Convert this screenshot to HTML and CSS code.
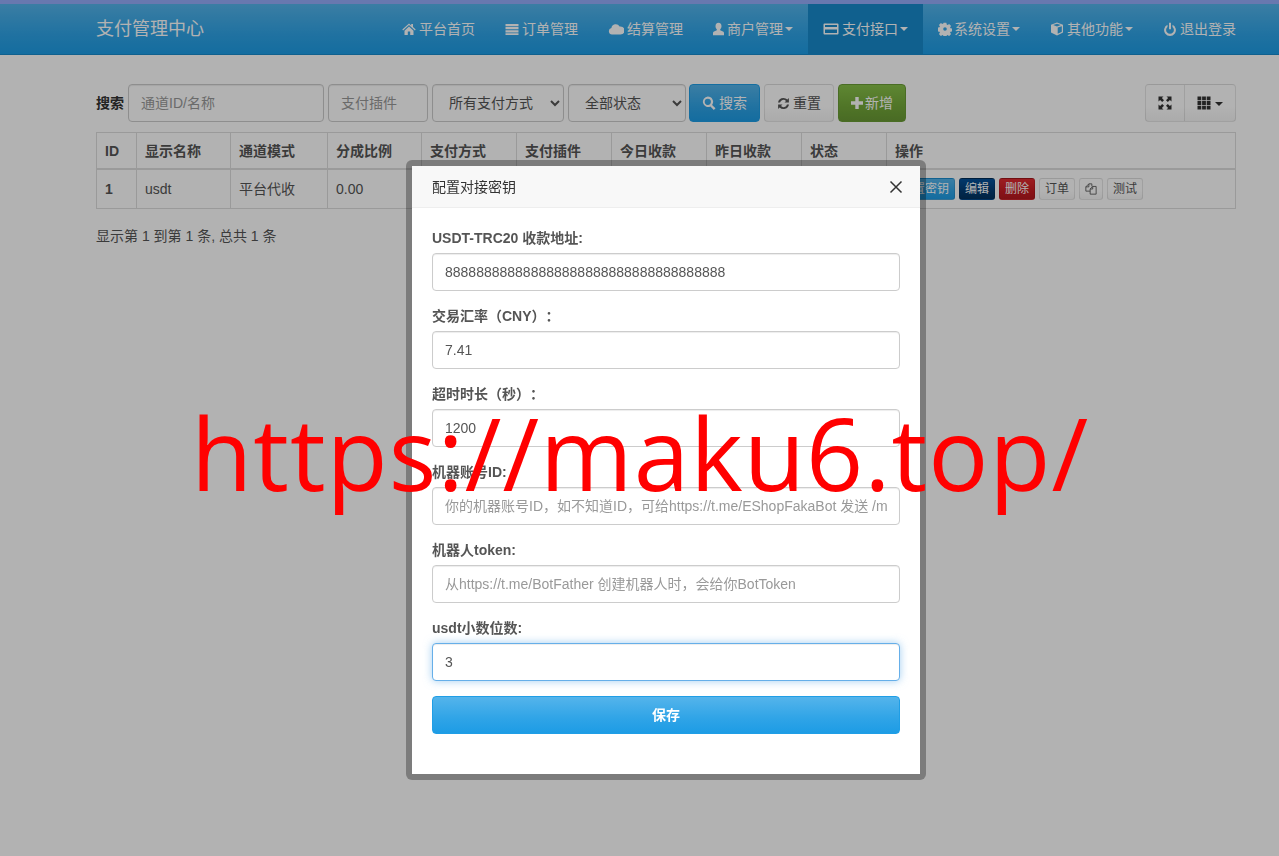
FILE: index.html
```html
<!DOCTYPE html>
<html lang="en">

<head>
  <meta charset="UTF-8" />
  <meta name="viewport" content="width=device-width, initial-scale=1.0" />
  <title>支付接口</title>
  <link rel="stylesheet" href="styles.css">
</head>

<body>
  <svg class="sprite" aria-hidden="true">
    <symbol id="i-home" viewBox="0 0 14 14"><path d="M7 1.500 .3 7.600l.8.800L7 3l5.900 5.400.8-.8L11 5.100V2H9.200v1.500zM2.500 8.700V13h3.300V9.500h2.400V13h3.300V8.700L7 4.600z"/></symbol>
    <symbol id="i-list" viewBox="0 0 14 14"><path d="M.5 2h13v2.200H.5zM.5 5.100h13v2.200H.5zM.5 8.200h13v2.200H.5zM.5 11.300h13v1.700H.5z"/></symbol>
    <symbol id="i-cloud" viewBox="0 0 16 14"><path d="M4 12.500a3.300 3.300 0 0 1-.6-6.500A4.400 4.400 0 0 1 11.600 4.500a3.100 3.100 0 0 1 .9 0 4 4 0 0 1 0 8z"/></symbol>
    <symbol id="i-user" viewBox="1.500 0 11 14"><path d="M7 .8a3 3.500 0 0 1 3 3.500c0 1.300-.6 2.500-1.300 3v1l2.800 1.300c.6.300 1 .8 1 1.500v2.100H1.500v-2.100c0-.7.400-1.200 1-1.500l2.800-1.300v-1C4.600 6.800 4 5.600 4 4.300A3 3.500 0 0 1 7 .8z"/></symbol>
    <symbol id="i-card" viewBox="0 0 16 14"><path fill-rule="evenodd" d="M1.500 1.500h13a1 1 0 0 1 1 1v9a1 1 0 0 1-1 1h-13a1 1 0 0 1-1-1v-9a1 1 0 0 1 1-1zM2 3v2h12V3zm0 4.500V11h12V7.500z"/></symbol>
    <symbol id="i-cog" viewBox="0 0 14 14"><path fill-rule="evenodd" d="M5.600.8h2.800l.3 1.700 1 .4 1.400-1 2 2-1 1.400.4 1 1.700.3v2.800l-1.700.3-.4 1 1 1.400-2 2-1.400-1-1 .4-.3 1.700H5.600l-.3-1.700-1-.4-1.400 1-2-2 1-1.400-.4-1-1.700-.3V5.600l1.700-.3.4-1-1-1.400 2-2 1.400 1 1-.4zM7 5.200a1.800 1.800 0 1 0 0 3.600 1.800 1.800 0 0 0 0-3.600z"/></symbol>
    <symbol id="i-cube" viewBox="0 0 14 14"><path fill-rule="evenodd" d="M7 .5 13 2.700v7.700L7 13.500 1 10.400V2.700zM3.200 3 7 4.400 10.800 3 7 1.700zM7.700 5.600v6.200l4.100-2.100V4.200z"/></symbol>
    <symbol id="i-power" viewBox="0 0 14 14"><path d="M6 .8h2v6.400H6zM4.500 2.700v2.200a3.900 3.900 0 1 0 5 0V2.700a5.900 5.900 0 1 1-5 0z"/></symbol>
    <symbol id="i-search" viewBox="0 0 14 14"><path fill-rule="evenodd" d="M5.800.5a5.300 5.300 0 0 1 4.300 8.400l3.400 3.400-1.700 1.700-3.400-3.400A5.300 5.300 0 1 1 5.800.5zm0 2.200a3.100 3.100 0 1 0 0 6.200 3.100 3.100 0 0 0 0-6.200z"/></symbol>
    <symbol id="i-refresh" viewBox="0 0 14 14"><path d="M7 1a6 6 0 0 1 4.200 1.700l1.600-1.600v4.700H8.100l1.600-1.600A3.800 3.800 0 0 0 3.300 6H1.100A6 6 0 0 1 7 1zM1.200 12.900V8.200h4.700l-1.600 1.600A3.800 3.800 0 0 0 10.700 8h2.200a6 6 0 0 1-10.100 3.300z"/></symbol>
    <symbol id="i-plus" viewBox="1 1 12 12"><path d="M5.300 1h3.400v4.300H13v3.400H8.700V13H5.300V8.700H1V5.300h4.300z"/></symbol>
    <symbol id="i-full" viewBox="0 0 14 14"><path d="M.5.500h5L3.900 2.100l2.100 2.100-1.800 1.800-2.100-2.100L.5 5.500zM13.500.5v5l-1.600-1.600-2.100 2.100L8 4.200l2.100-2.100L8.500.5zM.5 13.500v-5l1.600 1.600L4.200 8 6 9.800l-2.100 2.100 1.600 1.600zM13.500 13.500h-5l1.600-1.600L8 9.800 9.800 8l2.100 2.100 1.600-1.600z"/></symbol>
    <symbol id="i-grid" viewBox="0 0 14 14"><path d="M.5.500h3.800v3.800H.5zM5.100.5h3.800v3.800H5.100zM9.700.5h3.800v3.800H9.700zM.5 5.100h3.800v3.800H.5zM5.100 5.100h3.800v3.800H5.100zM9.700 5.100h3.800v3.800H9.700zM.5 9.700h3.800v3.800H.5zM5.100 9.700h3.800v3.800H5.100zM9.700 9.700h3.800v3.800H9.700z"/></symbol>
    <symbol id="i-copy" viewBox="0 0 14 14"><path fill="none" stroke="currentColor" d="M6 9.500H1V4.500L4.500 1H8v3M6 13V7l3-3h4v9zM9 4v3H6M4.500 1v3.500H1"/></symbol>
  </svg>

  <div class="top-strip"></div>
  <header class="navbar">
    <div class="container navbar-inner">
      <a class="brand">支付管理中心</a>
      <nav class="nav">
        <a><svg class="icon"><use href="#i-home"/></svg>平台首页</a>
        <a><svg class="icon"><use href="#i-list"/></svg>订单管理</a>
        <a><svg class="icon icon-wide"><use href="#i-cloud"/></svg>结算管理</a>
        <a><svg class="icon icon-user"><use href="#i-user"/></svg>商户管理<span class="caret"></span></a>
        <a class="active"><svg class="icon icon-wide"><use href="#i-card"/></svg>支付接口<span class="caret"></span></a>
        <a><svg class="icon icon-tight"><use href="#i-cog"/></svg>系统设置<span class="caret"></span></a>
        <a><svg class="icon"><use href="#i-cube"/></svg>其他功能<span class="caret"></span></a>
        <a><svg class="icon"><use href="#i-power"/></svg>退出登录</a>
      </nav>
    </div>
  </header>

  <main class="container">
    <div class="toolbar">
      <form class="search-form">
        <label>搜索</label>
        <input class="form-control w-name" type="text" placeholder="通道ID/名称" />
        <input class="form-control w-plugin" type="text" placeholder="支付插件" />
        <select class="form-control w-type">
          <option>所有支付方式</option>
        </select>
        <select class="form-control w-state">
          <option>全部状态</option>
        </select>
        <button type="button" class="btn btn-primary"><svg class="icon"><use href="#i-search"/></svg>搜索</button>
        <button type="button" class="btn btn-default"><svg class="icon icon-refresh"><use href="#i-refresh"/></svg>重置</button>
        <button type="button" class="btn btn-success"><svg class="icon icon-plus"><use href="#i-plus"/></svg>新增</button>
      </form>
      <div class="btn-group">
        <button type="button" class="btn btn-default"><svg class="icon"><use href="#i-full"/></svg></button>
        <button type="button" class="btn btn-default"><svg class="icon"><use href="#i-grid"/></svg><span class="caret"></span></button>
      </div>
    </div>

    <table class="table">
      <thead>
        <tr>
          <th class="c-id">ID</th>
          <th class="c-name">显示名称</th>
          <th class="c-mode">通道模式</th>
          <th class="c-rate">分成比例</th>
          <th class="c-std">支付方式</th>
          <th class="c-std">支付插件</th>
          <th class="c-std">今日收款</th>
          <th class="c-std">昨日收款</th>
          <th class="c-state">状态</th>
          <th>操作</th>
        </tr>
      </thead>
      <tbody>
        <tr>
          <td><b>1</b></td>
          <td>usdt</td>
          <td>平台代收</td>
          <td>0.00</td>
          <td></td>
          <td></td>
          <td></td>
          <td></td>
          <td></td>
          <td class="actions">
            <a class="btn-xs btn-primary">配置密钥</a>
            <a class="btn-xs btn-info">编辑</a>
            <a class="btn-xs btn-danger">删除</a>
            <a class="btn-xs btn-default">订单</a>
            <a class="btn-xs btn-default"><svg class="icon-copy"><use href="#i-copy"/></svg></a>
            <a class="btn-xs btn-default">测试</a>
          </td>
        </tr>
      </tbody>
    </table>

    <p class="pagination-info">显示第 1 到第 1 条, 总共 1 条</p>
  </main>

  <div class="backdrop"></div>

  <div class="modal">
    <div class="modal-title">
      <span>配置对接密钥</span>
      <svg class="close" viewBox="0 0 14 14"><path d="M1.500 1.500l11 11M12.500 1.500l-11 11"/></svg>
    </div>
    <form class="modal-body">
      <div class="form-group">
        <label>USDT-TRC20 收款地址:</label>
        <input class="form-control" type="text" value="888888888888888888888888888888888888" />
      </div>
      <div class="form-group">
        <label>交易汇率（CNY）：</label>
        <input class="form-control" type="text" value="7.41" />
      </div>
      <div class="form-group">
        <label>超时时长（秒）：</label>
        <input class="form-control" type="text" value="1200" />
      </div>
      <div class="form-group">
        <label>机器账号ID:</label>
        <input class="form-control" type="text" placeholder="你的机器账号ID，如不知道ID，可给https://t.me/EShopFakaBot 发送 /my_id" />
      </div>
      <div class="form-group">
        <label>机器人token:</label>
        <input class="form-control" type="text" placeholder="从https://t.me/BotFather 创建机器人时，会给你BotToken" />
      </div>
      <div class="form-group">
        <label>usdt小数位数:</label>
        <input class="form-control focused" type="text" value="3" />
      </div>
      <div class="form-group">
        <button type="button" class="btn btn-primary btn-block">保存</button>
      </div>
    </form>
  </div>

  <div class="watermark">https://maku6.top/</div>
</body>

</html>
```

FILE: styles.css
```css
* {
  margin: 0;
  padding: 0;
  box-sizing: border-box;
}

body {
  font-family: 'Liberation Sans', 'Noto Sans CJK SC', sans-serif;
  font-size: 14px;
  line-height: 20px;
  color: #555;
  background: #fff;
  height: 856px;
  overflow: hidden;
}

.sprite {
  display: none;
}

.container {
  width: 1140px;
  margin-left: 96px;
}

.top-strip {
  height: 4px;
  background: #95acfb;
}

/* Navbar */
.navbar {
  height: 51px;
  background: linear-gradient(#54b4eb, #2fa4e7 60%, #1d9ce5);
  border-bottom: 1px solid #178acc;
}

.navbar-inner {
  display: flex;
  justify-content: space-between;
  height: 50px;
}

.brand {
  font-size: 18px;
  line-height: 50px;
  color: #fff;
}

.nav {
  display: flex;
  margin-right: -15px;
}

.nav a {
  display: flex;
  align-items: center;
  padding: 0 15px;
  color: #fff;
  white-space: nowrap;
}

.nav a.active {
  background: #178acc;
}

.icon {
  width: 14px;
  height: 14px;
  margin-right: 3px;
  fill: currentColor;
  flex: none;
  vertical-align: -2px;
}

.icon-wide {
  width: 16px;
}

.icon-user {
  width: 11px;
}

.icon-tight {
  margin-right: 2px;
}

.icon-refresh {
  width: 13px;
  height: 13px;
}

.icon-plus {
  width: 12px;
  height: 12px;
  margin-right: 2px;
  vertical-align: -1px;
}

.caret {
  display: inline-block;
  margin-left: 2px;
  border-top: 4px solid currentColor;
  border-left: 4px solid transparent;
  border-right: 4px solid transparent;
  vertical-align: middle;
}

/* Toolbar */
.toolbar {
  display: flex;
  justify-content: space-between;
  margin-top: 29px;
}

.search-form {
  display: flex;
  align-items: center;
  gap: 4px;
}

.search-form label {
  font-weight: bold;
  color: #333;
}

.form-control {
  display: block;
  width: 100%;
  height: 38px;
  padding: 8px 12px;
  font-family: inherit;
  font-size: 14px;
  color: #555;
  background: #fff;
  border: 1px solid #ccc;
  border-radius: 4px;
  box-shadow: inset 0 1px 1px rgba(0, 0, 0, 0.075);
  outline: none;
}

.form-control::placeholder {
  color: #999;
}

.form-control.focused {
  border-color: #66afe9;
  box-shadow: inset 0 1px 1px rgba(0, 0, 0, 0.075), 0 0 8px rgba(102, 175, 233, 0.6);
}

.w-name {
  width: 196px;
}

.w-plugin {
  width: 100px;
}

.w-type {
  width: 132px;
}

.w-state {
  width: 118px;
  margin-right: -1px;
}

.btn {
  height: 38px;
  padding: 0 12px 2px;
  font-family: inherit;
  font-size: 14px;
  border: 1px solid rgba(0, 0, 0, 0.1);
  border-radius: 4px;
  white-space: nowrap;
}

.btn-primary {
  color: #fff;
  background: linear-gradient(#54b4eb, #2fa4e7 60%, #1d9ce5);
  border-color: #1f9ee6;
}

.btn-default {
  color: #555;
  background: linear-gradient(#fff, #fff 60%, #f5f5f5);
  border-color: rgba(0, 0, 0, 0.1);
}

.btn-success {
  color: #fff;
  background: linear-gradient(#88c149, #73a839 60%, #699934);
  border-color: #6a9c35;
}

.btn-info {
  color: #fff;
  background: linear-gradient(#04519b, #033c73 60%, #02325f);
  border-color: #02325f;
}

.btn-danger {
  color: #fff;
  background: linear-gradient(#e12b31, #c71c22 60%, #b5191f);
  border-color: #b5191f;
}

.btn-group {
  display: flex;
}

.btn-group .btn {
  border-radius: 0 4px 4px 0;
  margin-left: -1px;
  width: 52px;
  color: #333;
  padding-bottom: 0;
}

.btn-group .btn:first-child {
  width: 40px;
  margin-left: 0;
  border-radius: 4px 0 0 4px;
}

.btn-group .icon {
  margin-right: 0;
  vertical-align: -2px;
}

.btn-group .caret {
  margin-left: 4px;
}

/* Table */
.table {
  width: 100%;
  margin-top: 10px;
  border-collapse: collapse;
  table-layout: fixed;
}

.table th,
.table td {
  border: 1px solid #ddd;
  padding: 8px;
  text-align: left;
}

.table th {
  height: 35px;
  padding: 8px 8px 7px;
  border-bottom-width: 2px;
}

.table td {
  height: 39px;
  padding: 7px 8px;
}

.c-id {
  width: 40px;
}

.c-name {
  width: 94px;
}

.c-mode {
  width: 97px;
}

.c-rate {
  width: 94px;
}

.c-std {
  width: 95px;
}

.c-state {
  width: 85px;
}

.actions {
  white-space: nowrap;
  font-size: 0;
}

.btn-xs {
  display: inline-block;
  height: 22px;
  padding: 0 5px;
  margin-right: 4px;
  font-size: 12px;
  line-height: 20px;
  border: 1px solid rgba(0, 0, 0, 0.1);
  border-radius: 3px;
  vertical-align: middle;
}

.icon-copy {
  width: 12px;
  height: 12px;
  vertical-align: -2px;
  overflow: visible;
}

.pagination-info {
  margin-top: 17px;
}

/* Overlay */
.backdrop {
  position: fixed;
  top: 0;
  left: 0;
  width: 100%;
  height: 100%;
  background: rgba(0, 0, 0, 0.3);
}

.modal {
  position: absolute;
  top: 160px;
  left: 406px;
  width: 520px;
  height: 620px;
  background: #fff;
  background-clip: padding-box;
  border: 6px solid rgba(0, 0, 0, 0.3);
  border-radius: 6px;
}

.modal-title {
  display: flex;
  justify-content: space-between;
  align-items: center;
  height: 42px;
  padding: 0 17px 0 20px;
  color: #333;
  background: #f8f8f8;
  border-bottom: 1px solid #eee;
}

.close {
  width: 14px;
  height: 14px;
  fill: none;
  stroke: #333;
  stroke-width: 1.500;
}

.modal-body {
  padding: 20px;
}

.form-group {
  margin-bottom: 15px;
}

.form-group label {
  display: block;
  margin-bottom: 5px;
  font-weight: bold;
  text-spacing-trim: space-all;
}

.btn-block {
  display: block;
  width: 100%;
  font-weight: bold;
}

.watermark {
  position: absolute;
  top: 384px;
  left: 191px;
  font-family: 'Open Sans', sans-serif;
  font-size: 100px;
  line-height: 136px;
  letter-spacing: 1px;
  color: #f00;
  white-space: nowrap;
}
```
